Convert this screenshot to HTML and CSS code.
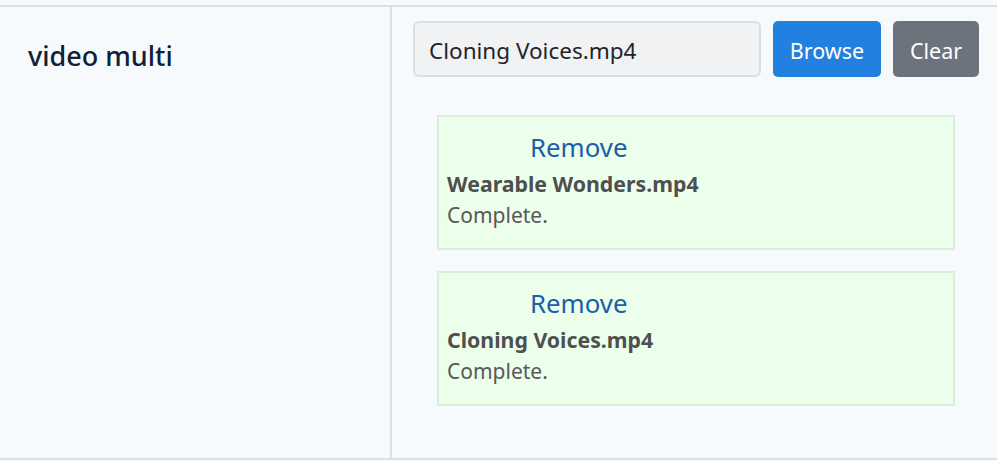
FILE: index.html
```html
<!DOCTYPE html>
<html lang="en">
<head>
<meta charset="utf-8">
<title>video multi</title>
<link rel="stylesheet" href="styles.css">
</head>
<body>
<div class="page">
  <div class="row">
    <div class="label-cell">
      <div class="label">video multi</div>
    </div>
    <div class="field-cell">
      <div class="file-bar">
        <input class="file-input" type="text" value="Cloning Voices.mp4" readonly>
        <button class="btn btn-browse" type="button">Browse</button>
        <button class="btn btn-clear" type="button">Clear</button>
      </div>
      <div class="file-list">
        <div class="file-card">
          <a class="remove" href="#">Remove</a>
          <div class="file-name">Wearable Wonders.mp4</div>
          <div class="file-status">Complete.</div>
        </div>
        <div class="file-card">
          <a class="remove" href="#">Remove</a>
          <div class="file-name">Cloning Voices.mp4</div>
          <div class="file-status">Complete.</div>
        </div>
      </div>
    </div>
  </div>
</div>
</body>
</html>
```
FILE: styles.css
```css
html, body {
  margin: 0;
  padding: 0;
  background: #f7fafd;
  font-family: "Noto Sans", "Open Sans", sans-serif;
}

.page {
  padding-top: 5px;
}

.row {
  display: flex;
  border-top: 2px solid #dddfe1;
  border-bottom: 2px solid #dddfe1;
  height: 451px;
}

.label-cell {
  flex: none;
  box-sizing: border-box;
  width: 392px;
  border-right: 2px solid #dddfe1;
  padding: 29px 0 0 28px;
}

.label {
  font-size: 27px;
  line-height: 40px;
  font-weight: 500;
  color: #0e2137;
}

.field-cell {
  flex: 1;
  min-width: 0;
  padding: 14px 18px 0 21px;
}

.file-bar {
  display: flex;
  height: 56px;
}

.file-input {
  flex: 1 1 0;
  width: 0;
  min-width: 0;
  box-sizing: border-box;
  height: 56px;
  margin: 0 12px 0 0;
  padding: 2px 14px 0 14px;
  border: 2px solid #dcdde0;
  border-radius: 6px;
  background: #f1f2f4;
  color: #212529;
  font-family: inherit;
  font-size: 22.5px;
  outline: none;
}

.btn {
  flex: none;
  box-sizing: border-box;
  height: 56px;
  padding: 2px 0 0 0;
  border: none;
  border-radius: 5px;
  color: #ffffff;
  font-family: inherit;
  font-size: 21.5px;
  text-align: center;
}

.btn-browse {
  width: 108px;
  background: #2180e0;
  margin-right: 12px;
}

.btn-clear {
  width: 86px;
  background: #6c737d;
}

.file-list {
  display: flex;
  flex-direction: column;
  gap: 21px;
  margin: 38px 24px 0 24px;
}

.file-card {
  border: 2px solid #d9eedb;
  background: #ebffea;
  padding: 12px 8px 17px 8px;
}

.remove {
  display: block;
  margin-left: 83px;
  font-size: 25.8px;
  line-height: 36px;
  color: #1a5fa8;
  text-decoration: none;
}

.file-name {
  margin-top: 4px;
  font-size: 21.3px;
  line-height: 30px;
  font-weight: 700;
  color: #4f4f4f;
}

.file-status {
  font-size: 21px;
  line-height: 32px;
  color: #585858;
}
```
